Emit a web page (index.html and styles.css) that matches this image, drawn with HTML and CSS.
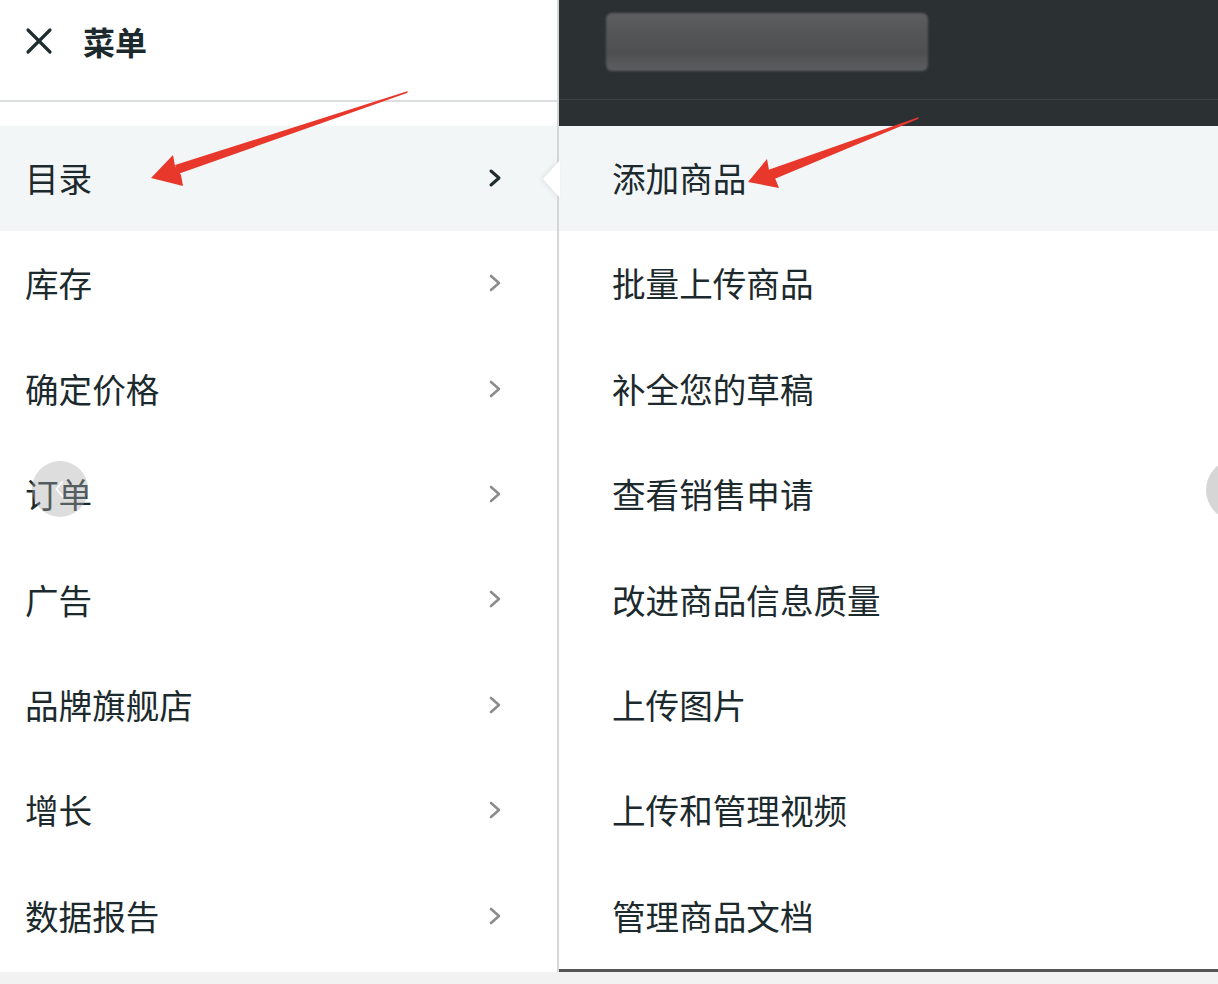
FILE: index.html
```html
<!DOCTYPE html>
<html lang="zh">
<head>
<meta charset="utf-8">
<link rel="stylesheet" href="styles.css">
</head>
<body>
<div class="page">
  <div class="main">
    <aside class="left">
      <div class="head">
        <svg class="close" viewBox="0 0 28 28" width="28" height="28"><path d="M3 3 L25 25 M25 3 L3 25" stroke="#1f2d30" stroke-width="3.2" fill="none" stroke-linecap="round"/></svg>
        <span class="title">菜单</span>
      </div>
      <ul class="list">
        <li class="row active"><span>目录</span><svg class="chev" viewBox="0 0 16 20" width="16" height="20"><path d="M4 3 L12 10 L4 17" stroke="#1f2d30" stroke-width="3" fill="none" stroke-linecap="round" stroke-linejoin="round"/></svg></li>
        <li class="row"><span>库存</span><svg class="chev" viewBox="0 0 16 20" width="16" height="20"><path d="M4 3 L12 10 L4 17" stroke="#8a8c8d" stroke-width="2.6" fill="none" stroke-linecap="round" stroke-linejoin="round"/></svg></li>
        <li class="row"><span>确定价格</span><svg class="chev" viewBox="0 0 16 20" width="16" height="20"><path d="M4 3 L12 10 L4 17" stroke="#8a8c8d" stroke-width="2.6" fill="none" stroke-linecap="round" stroke-linejoin="round"/></svg></li>
        <li class="row"><span>订单</span><svg class="chev" viewBox="0 0 16 20" width="16" height="20"><path d="M4 3 L12 10 L4 17" stroke="#8a8c8d" stroke-width="2.6" fill="none" stroke-linecap="round" stroke-linejoin="round"/></svg></li>
        <li class="row"><span>广告</span><svg class="chev" viewBox="0 0 16 20" width="16" height="20"><path d="M4 3 L12 10 L4 17" stroke="#8a8c8d" stroke-width="2.6" fill="none" stroke-linecap="round" stroke-linejoin="round"/></svg></li>
        <li class="row"><span>品牌旗舰店</span><svg class="chev" viewBox="0 0 16 20" width="16" height="20"><path d="M4 3 L12 10 L4 17" stroke="#8a8c8d" stroke-width="2.6" fill="none" stroke-linecap="round" stroke-linejoin="round"/></svg></li>
        <li class="row"><span>增长</span><svg class="chev" viewBox="0 0 16 20" width="16" height="20"><path d="M4 3 L12 10 L4 17" stroke="#8a8c8d" stroke-width="2.6" fill="none" stroke-linecap="round" stroke-linejoin="round"/></svg></li>
        <li class="row"><span>数据报告</span><svg class="chev" viewBox="0 0 16 20" width="16" height="20"><path d="M4 3 L12 10 L4 17" stroke="#8a8c8d" stroke-width="2.6" fill="none" stroke-linecap="round" stroke-linejoin="round"/></svg></li>
      </ul>
      <div class="circle-left"><svg viewBox="0 0 20 30" width="14" height="22"><path d="M14 4 L5 15 L14 26" stroke="#fff" stroke-width="2.4" fill="none"/></svg></div>
    </aside>
    <section class="right">
      <div class="dark">
        <div class="blur-box"></div>
        <div class="dark-line"></div>
      </div>
      <ul class="list sub">
        <li class="row active">添加商品</li>
        <li class="row">批量上传商品</li>
        <li class="row">补全您的草稿</li>
        <li class="row">查看销售申请</li>
        <li class="row">改进商品信息质量</li>
        <li class="row">上传图片</li>
        <li class="row">上传和管理视频</li>
        <li class="row">管理商品文档</li>
      </ul>
      <div class="pointer"></div>
      <div class="circle-right"></div>
    </section>
  </div>
  <div class="strip"></div>
  <svg class="arrows" viewBox="0 0 1218 984" width="1218" height="984">
    <polygon fill="#e8382c" points="408,91 407,93 178,174 175,165"/>
    <polygon fill="#e8382c" points="151,178 173,155 175,166 181,175 183,186"/>
    <polygon fill="#e8382c" points="919,117 918,119 772,180 768,170"/>
    <polygon fill="#e8382c" points="748,182 767,159 769,170 775,178 779,188"/>
  </svg>
</div>
</body>
</html>
```
FILE: styles.css
```css
* { box-sizing: border-box; }
html, body { margin: 0; padding: 0; }
body {
  width: 1218px;
  height: 984px;
  overflow: hidden;
  background: #f2f2f2;
  font-family: "Noto Sans CJK SC", "Noto Sans", sans-serif;
  color: #1c2a2d;
}
.page { position: relative; width: 1218px; height: 984px; }
.main { display: flex; height: 972px; }
.left {
  position: relative;
  width: 559px;
  background: #fff;
  border-right: 2px solid #d4d6d7;
}
.head {
  height: 102px;
  display: flex;
  align-items: center;
  padding: 0 0 18px 25px;
  border-bottom: 2px solid #dcdfe0;
}
.close { flex: none; }
.title {
  margin-left: 30px;
  font-size: 32px;
  font-weight: 700;
  line-height: 1;
  color: #1c2a2d;
}
.list { list-style: none; margin: 0; padding: 0; }
.left .list { padding-top: 24px; }
.row {
  height: 105.43px;
  display: flex;
  align-items: center;
  justify-content: space-between;
  padding: 0 54px 2px 25px;
  font-size: 33.6px;
  line-height: 1;
}
.row span { display: block; }
.row.active { background: #f3f6f7; }
.circle-left {
  position: absolute;
  left: 32px;
  top: 461px;
  width: 56px;
  height: 56px;
  border-radius: 50%;
  background: rgba(170, 170, 170, 0.4);
  display: flex;
  align-items: center;
  justify-content: center;
}
.right {
  position: relative;
  flex: 1;
  background: #fff;
  border-bottom: 3px solid #555;
}
.dark {
  position: relative;
  height: 126px;
  background: #2b3133;
  padding: 13px 0 0 47px;
}
.blur-box {
  width: 322px;
  height: 58px;
  border-radius: 6px;
  background: linear-gradient(180deg, #5e5f60 0%, #555657 30%, #4f5051 70%, #5d5e5f 100%);
  filter: blur(1px);
}
.dark-line {
  position: absolute;
  left: 0;
  right: 0;
  top: 99px;
  height: 1px;
  background: #3c4446;
}
.sub .row { padding-left: 53px; }
.pointer {
  position: absolute;
  left: -16px;
  top: 160px;
  width: 0;
  height: 0;
  border-top: 19px solid transparent;
  border-bottom: 19px solid transparent;
  border-right: 17px solid #fff;
  filter: drop-shadow(-2px 0 2px rgba(0,0,0,0.08));
}
.circle-right {
  position: absolute;
  left: 647px;
  top: 459px;
  width: 62px;
  height: 62px;
  border-radius: 50%;
  background: #d6d6d6;
}
.strip { height: 12px; background: #f2f2f2; }
.arrows { position: absolute; left: 0; top: 0; pointer-events: none; }
```
